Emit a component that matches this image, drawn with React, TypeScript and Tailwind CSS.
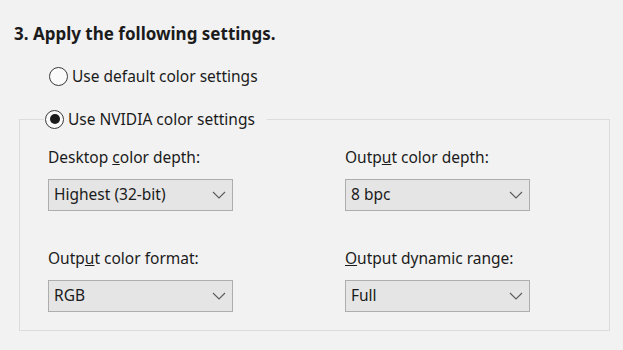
const FONT = "font-['Segoe_UI','Noto_Sans','Open_Sans',sans-serif]"

function Chevron() {
  return (
    <svg width="14" height="8" viewBox="0 0 14 8" className="flex-shrink-0">
      <path d="M1 1l6 6 6-6" fill="none" stroke="#5a5a5a" strokeWidth="1.1" />
    </svg>
  )
}

function Radio({ checked, label }: { checked?: boolean; label: string }) {
  return (
    <label className="flex items-center gap-[4px] text-[15.5px] leading-[20px] text-[#1b1b1b]">
      <span className="w-[19px] h-[19px] rounded-full border-[1.5px] border-[#3a3a3a] bg-[#fafafa] flex items-center justify-center flex-shrink-0">
        {checked && <span className="w-[10px] h-[10px] rounded-full bg-[#1b1b1b]" />}
      </span>
      {label}
    </label>
  )
}

function Field({ label, value }: { label: React.ReactNode; value: string }) {
  return (
    <div className="flex flex-col">
      <p className="text-[15.5px] leading-[20px] text-[#1b1b1b]">{label}</p>
      <div className="mt-[12px] w-[185px] h-[32px] bg-[#e5e5e5] border border-[#adadad] flex items-center justify-between pl-[5px] pr-[6px] text-[15.5px] text-[#1b1b1b]">
        <span>{value}</span>
        <Chevron />
      </div>
    </div>
  )
}

export default function App() {
  return (
    <div className={`${FONT} w-[623px] h-[350px] bg-[#f2f2f2] pt-[23px] pl-[14px] pr-[13px] overflow-hidden`}>
      <h2 className="text-[17px] leading-[22px] font-bold text-[#1b1b1b]">3. Apply the following settings.</h2>
      <div className="pl-[35px] mt-[21px]">
        <Radio label="Use default color settings" />
      </div>
      <fieldset className="ml-[5px] mt-[23px] border border-[#dcdcdc] h-[222px] px-[28px]">
        <legend className="pl-[1px] pr-[12px] ml-[-4px]">
          <Radio checked label="Use NVIDIA color settings" />
        </legend>
        <div className="grid grid-cols-[297px_1fr] mt-[18px]">
          <Field label={<>Desktop <u>c</u>olor depth:</>} value="Highest (32-bit)" />
          <Field label={<>Outp<u>u</u>t color depth:</>} value="8 bpc" />
          <div className="mt-[37px]">
            <Field label={<>Outp<u>u</u>t color format:</>} value="RGB" />
          </div>
          <div className="mt-[37px]">
            <Field label={<><u>O</u>utput dynamic range:</>} value="Full" />
          </div>
        </div>
      </fieldset>
    </div>
  )
}
